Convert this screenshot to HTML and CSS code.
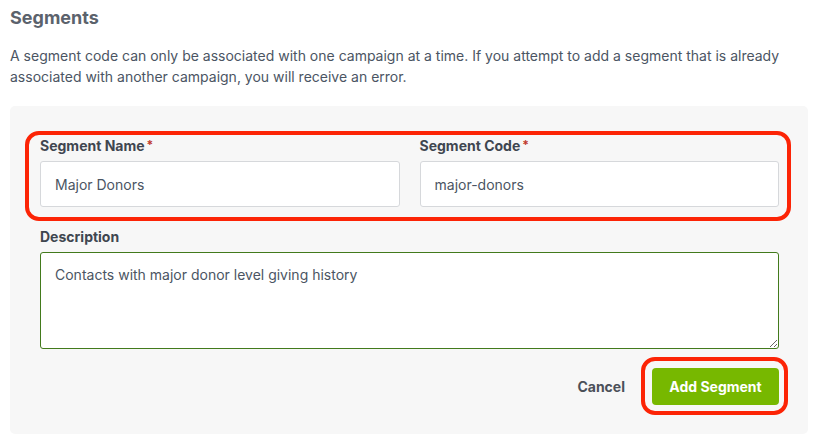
FILE: index.html
```html
<!DOCTYPE html>
<html lang="en">
<head>
    <meta charset="UTF-8">
    <meta name="viewport" content="width=device-width, initial-scale=1.0">
    <title>Segments</title>
    <link rel="stylesheet" href="styles.css">
</head>
<body>
    <div class="page">
        <h2 class="title">Segments</h2>
        <p class="intro">A segment code can only be associated with one campaign at a time. If you attempt to add a segment that is already associated with another campaign, you will receive an error.</p>

        <form class="segment-form">
            <div class="field-row highlight">
                <div class="field">
                    <label for="segName">Segment Name<span class="req">*</span></label>
                    <input id="segName" type="text" value="Major Donors">
                </div>
                <div class="field">
                    <label for="segCode">Segment Code<span class="req">*</span></label>
                    <input id="segCode" type="text" value="major-donors">
                </div>
            </div>

            <div class="field desc">
                <label for="segDesc">Description</label>
                <textarea id="segDesc">Contacts with major donor level giving history</textarea>
            </div>

            <div class="actions">
                <button type="button" class="btn-cancel">Cancel</button>
                <button type="button" class="btn-add">Add Segment</button>
            </div>
        </form>
    </div>

    <script>
        // put the caret at the end of the description
        const desc = document.getElementById("segDesc");
        desc.focus();
        desc.setSelectionRange(desc.value.length, desc.value.length);
    </script>
</body>
</html>
```

FILE: styles.css
```css
/* Reset */
* {
    margin: 0;
    padding: 0;
    box-sizing: border-box;
    font-family: 'Inter', 'Liberation Sans', sans-serif;
}

body {
    background: #ffffff;
    color: #4b5563;
}

.page {
    padding: 6px 7px 0 10px;
}

.title {
    font-size: 18px;
    line-height: 24px;
    font-weight: 700;
    color: #5b626c;
}

.intro {
    margin-top: 15px;
    font-size: 14px;
    line-height: 21px;
    color: #4b5563;
}

/* Form panel */
.segment-form {
    margin-top: 19px;
    background: #f7f7f7;
    border-radius: 5px;
    padding: 29px 29px 29px 30px;
}

.field-row {
    display: flex;
    gap: 20px;
}

.field {
    flex: 1;
    display: flex;
    flex-direction: column;
}

.field label {
    font-size: 14px;
    line-height: 20px;
    font-weight: 700;
    color: #3f4650;
    margin-bottom: 5px;
}

.req {
    color: #c0392b;
    font-size: 12px;
    margin-left: 2px;
    vertical-align: 2px;
}

.field input {
    height: 46px;
    border: 1px solid #d6d8db;
    border-radius: 3px;
    background: #fff;
    padding: 0 14px;
    font-size: 14px;
    color: #4b5563;
}

.desc {
    margin-top: 20px;
}

.desc textarea {
    height: 97px;
    border: 1px solid #427a1c;
    border-radius: 3px;
    background: #fff;
    padding: 12px 14px;
    font-size: 14px;
    line-height: 20px;
    color: #4b5563;
    outline: none;
    caret-color: #111;
}

/* Buttons */
.actions {
    margin-top: 19px;
    display: flex;
    justify-content: flex-end;
    align-items: center;
    gap: 27px;
}

.btn-cancel {
    background: none;
    border: none;
    font-size: 14px;
    font-weight: 700;
    color: #4b5059;
    cursor: pointer;
}

.btn-add {
    position: relative;
    height: 37px;
    width: 127px;
    border: none;
    border-radius: 4px;
    background: #77b800;
    color: #fff;
    font-size: 14px;
    font-weight: 700;
    cursor: pointer;
}

/* Red annotation outlines */
.highlight {
    position: relative;
}

.highlight::after,
.btn-add::after {
    content: "";
    position: absolute;
    border: 4px solid #fc2406;
    border-radius: 14px;
    pointer-events: none;
}

.highlight::after {
    top: -4px;
    bottom: -14px;
    left: -15px;
    right: -12px;
}

.btn-add::after {
    top: -11px;
    bottom: -10px;
    left: -11px;
    right: -9px;
}
```
